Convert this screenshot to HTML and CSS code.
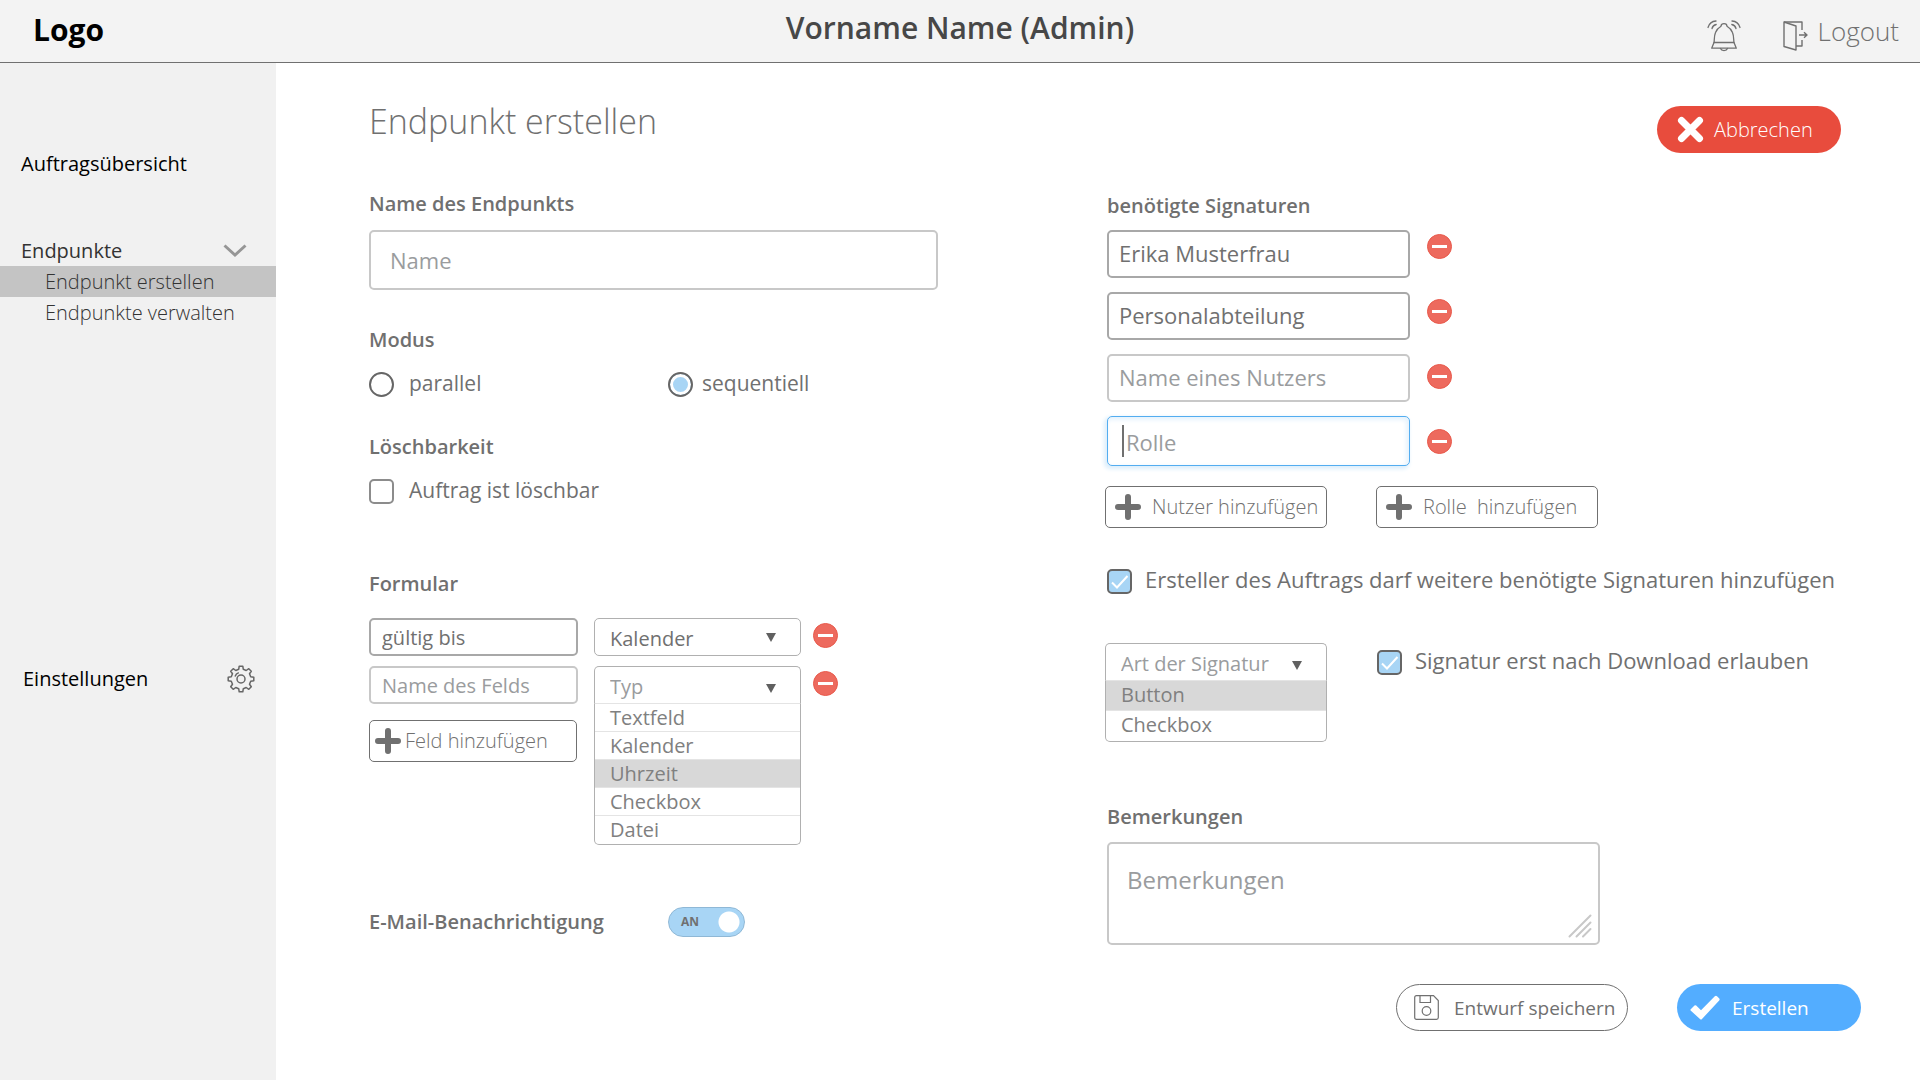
FILE: index.html
```html
<!DOCTYPE html>
<html lang="de">
<head>
<meta charset="utf-8">
<meta name="viewport" content="width=device-width, initial-scale=1">
<title>Endpunkt erstellen</title>
<link rel="stylesheet" href="styles.css">
</head>
<body>
<svg width="0" height="0" class="sprite" aria-hidden="true">
  <symbol id="minus" viewBox="0 0 25 25"><circle cx="12.5" cy="12.5" r="12" fill="#ed6a5e" stroke="#e8594b"/><path d="M5 12.5h15" stroke="#fff" stroke-width="3"/></symbol>
  <symbol id="plus" viewBox="0 0 26 26"><path d="M13 3v20M3 13h20" stroke="#707070" stroke-width="6" stroke-linecap="round"/></symbol>
</svg>

<header class="topbar">
  <a class="logo" href="#">Logo</a>
  <p class="user">Vorname Name (Admin)</p>
  <div class="tools">
    <button class="icon-button" type="button" aria-label="Benachrichtigungen">
      <svg width="34" height="32" viewBox="0 0 34 32" fill="none" stroke="#707070" stroke-width="1.3" stroke-linecap="round" stroke-linejoin="round">
        <path d="M7 22.500C7.500 20 7 16 8.500 12.500C9.600 9.500 12 7.500 14 6.300C14 4.500 15.200 3.600 17 3.600S20 4.500 20 6.300C22 7.500 24.400 9.500 25.500 12.500C27 16 26.500 20 27 22.500z"/>
        <path d="M7 22.500L4.700 28.200H29.300L27 22.500"/>
        <path d="M13.500 28.500C14.500 31.200 19.500 31.200 20.500 28.500"/>
        <path d="M1 7.500C2 4 5 1.200 9 1M5 8.500C5.500 6.500 7 5 9.200 4.500M33 7.500C32 4 29 1.200 25 1M29 8.500C28.500 6.500 27 5 24.800 4.500"/>
      </svg>
    </button>
    <a class="logout" href="#">
      <svg width="25" height="30" viewBox="0 0 25 30" fill="none" stroke="#707070" stroke-width="1.400" stroke-linejoin="round">
        <path d="M1 1L13 5V29L1 25.500z"/>
        <path d="M1 1H19V9M19 19V25H13"/>
        <path d="M16 14H24M21 11.300L24 14L21 16.700"/>
      </svg>
      <span>Logout</span>
    </a>
  </div>
</header>

<div class="layout">
  <nav class="sidebar">
    <a class="nav-link" href="#">Auftragsübersicht</a>
    <section class="nav-group">
      <a class="nav-link nav-parent" href="#">Endpunkte
        <svg width="24" height="14" viewBox="0 0 24 14" fill="none" stroke="#969696" stroke-width="3"><path d="M1.500 1.500L12 11L22.500 1.500"/></svg>
      </a>
      <a class="nav-sub active" href="#">Endpunkt erstellen</a>
      <a class="nav-sub" href="#">Endpunkte verwalten</a>
    </section>
    <a class="nav-link nav-settings" href="#">Einstellungen
      <svg width="28" height="28" viewBox="0 0 28 28" fill="none" stroke="#666" stroke-width="1.500" stroke-linejoin="round">
        <path d="M11.700 4.300L12.200 1.200H15.800L16.300 4.300L19.200 5.500L21.800 3.700L24.300 6.200L22.500 8.800L23.700 11.700L26.800 12.200V15.800L23.700 16.300L22.500 19.200L24.300 21.800L21.800 24.300L19.200 22.500L16.300 23.700L15.800 26.800H12.200L11.700 23.700L8.800 22.500L6.200 24.300L3.700 21.800L5.500 19.200L4.300 16.300L1.200 15.800V12.200L4.300 11.700L5.500 8.800L3.700 6.200L6.200 3.700L8.800 5.500z"/>
        <circle cx="14" cy="14" r="4"/>
        <path d="M8 11.500C8.700 9.500 10 8.200 11.800 7.600"/>
      </svg>
    </a>
  </nav>

  <main class="content">
    <form class="endpoint-form" onsubmit="return false">
      <div class="heading">
        <h1>Endpunkt erstellen</h1>
        <button class="pill pill-cancel" type="button">
          <svg width="27" height="27" viewBox="0 0 27 27" stroke="#fff" stroke-width="7" stroke-linecap="round"><path d="M4.500 4.500L22.500 22.500M22.500 4.500L4.500 22.500"/></svg>
          Abbrechen
        </button>
      </div>

      <div class="columns">
        <div class="column">
          <label class="label" for="endpoint-name">Name des Endpunkts</label>
          <input class="field field-name" id="endpoint-name" type="text" placeholder="Name">

          <fieldset class="group">
            <legend class="label">Modus</legend>
            <div class="choices">
              <label class="choice choice-mode"><input type="radio" name="modus"><span>parallel</span></label>
              <label class="choice choice-mode"><input type="radio" name="modus" checked><span>sequentiell</span></label>
            </div>
          </fieldset>

          <fieldset class="group">
            <legend class="label">Löschbarkeit</legend>
            <div class="choices">
              <label class="choice"><input type="checkbox"><span>Auftrag ist löschbar</span></label>
            </div>
          </fieldset>

          <fieldset class="group group-form">
            <legend class="label">Formular</legend>
            <div class="rows">
              <div class="row">
                <input class="field field-small filled" type="text" value="gültig bis" aria-label="Feldname">
                <div class="dropdown">
                  <select aria-label="Feldtyp"><option>Kalender</option></select>
                </div>
                <button class="icon-button" type="button" aria-label="Feld entfernen"><svg width="25" height="25"><use href="#minus"/></svg></button>
              </div>
              <div class="row">
                <input class="field field-small" type="text" placeholder="Name des Felds" aria-label="Feldname">
                <div class="dropdown open">
                  <select class="unset" aria-label="Feldtyp"><option>Typ</option></select>
                  <ul class="menu" role="listbox">
                    <li role="option">Textfeld</li>
                    <li role="option">Kalender</li>
                    <li role="option" class="current">Uhrzeit</li>
                    <li role="option">Checkbox</li>
                    <li role="option">Datei</li>
                  </ul>
                </div>
                <button class="icon-button" type="button" aria-label="Feld entfernen"><svg width="25" height="25"><use href="#minus"/></svg></button>
              </div>
            </div>
            <button class="add add-field" type="button"><svg width="26" height="26"><use href="#plus"/></svg>Feld hinzufügen</button>
          </fieldset>

          <div class="notify">
            <label class="label" for="mail">E-Mail-Benachrichtigung</label>
            <span class="switch"><input id="mail" type="checkbox" role="switch" checked><span class="switch-text">AN</span></span>
          </div>
        </div>

        <div class="column column-right">
          <fieldset class="signers">
            <legend class="label">benötigte Signaturen</legend>
            <div class="signer-list">
              <div class="signer-fields">
                <input class="field field-signer filled" type="text" value="Erika Musterfrau" aria-label="Nutzer">
                <input class="field field-signer filled" type="text" value="Personalabteilung" aria-label="Rolle">
                <input class="field field-signer" type="text" placeholder="Name eines Nutzers" aria-label="Nutzer">
                <div class="focus-wrap">
                  <input class="field field-signer focused" type="text" placeholder="Rolle" aria-label="Rolle">
                  <span class="caret"></span>
                </div>
              </div>
              <div class="signer-removes">
                <button class="icon-button" type="button" aria-label="Erika Musterfrau entfernen"><svg width="25" height="25"><use href="#minus"/></svg></button>
                <button class="icon-button" type="button" aria-label="Personalabteilung entfernen"><svg width="25" height="25"><use href="#minus"/></svg></button>
                <button class="icon-button" type="button" aria-label="Nutzer entfernen"><svg width="25" height="25"><use href="#minus"/></svg></button>
                <button class="icon-button" type="button" aria-label="Rolle entfernen"><svg width="25" height="25"><use href="#minus"/></svg></button>
              </div>
            </div>
          </fieldset>

          <div class="adds">
            <button class="add" type="button"><svg width="26" height="26"><use href="#plus"/></svg>Nutzer hinzufügen</button>
            <button class="add" type="button"><svg width="26" height="26"><use href="#plus"/></svg>Rolle&nbsp; hinzufügen</button>
          </div>

          <label class="choice choice-more"><input type="checkbox" checked><span>Ersteller des Auftrags darf weitere benötigte Signaturen hinzufügen</span></label>

          <div class="signature-kind">
            <div class="dropdown dropdown-wide open">
              <select class="unset" aria-label="Art der Signatur"><option>Art der Signatur</option></select>
              <ul class="menu" role="listbox">
                <li role="option" class="current">Button</li>
                <li role="option">Checkbox</li>
              </ul>
            </div>
            <label class="choice"><input type="checkbox" checked><span>Signatur erst nach Download erlauben</span></label>
          </div>

          <div class="remarks">
            <label class="label" for="remarks">Bemerkungen</label>
            <div class="remarks-box">
              <textarea class="field" id="remarks" placeholder="Bemerkungen"></textarea>
              <svg class="grip" width="24" height="24" viewBox="0 0 24 24" stroke="#c8c8c8" stroke-width="2" stroke-linecap="round"><path d="M1.500 22.500L22.500 1.500M8.500 22.500L22.500 8.500M15 22.500L22.500 15"/></svg>
            </div>
          </div>
        </div>
      </div>

      <div class="actions">
        <button class="pill pill-draft" type="button">
          <svg width="25" height="25" viewBox="0 0 25 25" fill="none" stroke="#707070" stroke-width="1.200"><path d="M2.500 .700H19.500L24.300 5.500V22.500Q24.300 24.300 22.500 24.300H2.500Q.700 24.300 .700 22.500V2.500Q.700 .700 2.500 .700z"/><path d="M6 .700V7.500H16.500V.700"/><circle cx="12.500" cy="16" r="4.300"/></svg>
          Entwurf speichern
        </button>
        <button class="pill pill-create" type="submit">
          <svg width="30" height="26" viewBox="0 0 30 26" fill="#fff"><path d="M.500 14.500L4.500 10.500Q5.300 9.900 6.200 10.600L11 15.300L24.800 1.200Q26 .300 27 1.200L29.300 3.500Q30 4.500 29.200 5.500L12 24Q11 25 10 24L.600 15.500Q.200 15 .500 14.500z"/></svg>
          Erstellen
        </button>
      </div>
    </form>
  </main>
</div>
</body>
</html>
```
FILE: styles.css
```css
* { box-sizing: border-box; }

body {
  margin: 0;
  min-height: 100vh;
  display: flex;
  flex-direction: column;
  background: #fff;
  color: #707070;
  font: 20px/28px "Open Sans", "Noto Sans", sans-serif;
}

a { color: inherit; text-decoration: none; }
h1, p, ul { margin: 0; padding: 0; }
svg { display: block; flex: none; }
fieldset { margin: 0; padding: 0; border: 0; min-width: 0; }
legend { padding: 0; }
input, select, textarea, button { font: inherit; color: inherit; margin: 0; }
button { cursor: pointer; }
.sprite { position: absolute; }

/* Top bar */
.topbar {
  display: grid;
  grid-template-columns: 1fr auto 1fr;
  height: 63px;
  padding: 0 21px;
  background: #f3f3f3;
  border-bottom: 1px solid #707070;
}
.logo { padding: 10px 0 0 12px; color: #000; font-size: 30px; font-weight: 700; line-height: 40px; }
.user { padding-top: 8px; color: #474747; font-size: 30px; font-weight: 600; line-height: 40px; }
.tools { display: flex; justify-content: flex-end; align-items: flex-start; padding-top: 12px; gap: 42px; }
.tools .icon-button { padding-top: 8px; }
.logout { display: flex; gap: 10px; font-size: 26px; font-weight: 300; line-height: 38px; }
.logout svg { margin-top: 9px; }
.icon-button { padding: 0; border: 0; background: none; }

/* Sidebar */
.layout { flex: 1; display: flex; }
.sidebar { flex: 0 0 276px; padding-top: 86px; background: #f1f1f1; color: #000; }
.nav-link { display: flex; justify-content: space-between; align-items: center; height: 30px; padding: 0 29px 0 21px; }
.nav-group { margin: 57px 0 336px; }
.nav-parent { color: #333; }
.nav-settings { padding: 0 21px 0 23px; }
.nav-sub { display: block; padding-left: 45px; color: #333; font-weight: 300; line-height: 31px; }
.nav-sub.active { background: #c4c4c4; }

/* Page */
.content { flex: 1; min-width: 0; padding: 35px 79px 40px 93px; }
.heading { display: flex; justify-content: space-between; align-items: flex-start; }
h1 { font-size: 34px; font-weight: 300; line-height: 46px; }
.columns { display: grid; grid-template-columns: 1fr 1fr; margin-top: 37px; }
.column-right { padding-top: 2px; }
.label { display: block; font-weight: 600; }

/* Fields */
.field {
  display: block;
  max-width: 100%;
  border: 2px solid #c8c8c8;
  border-radius: 5px;
  background: #fff;
  outline: 0;
}
.field::placeholder { color: #9a9c9e; opacity: 1; }
.filled { border-color: #a8a8a8; }
.field-name { width: 569px; height: 60px; margin-top: 12px; padding: 0 19px; font-size: 22px; }
.field-small { width: 209px; height: 38px; padding: 0 11px; }
.field-signer { width: 303px; height: 48px; padding: 0 10px 2px; font-size: 22px; }
.focused { height: 50px; padding: 2px 18px 0; border: 1px solid #53adf0; box-shadow: -2px 2px 4px 1px #dceefb, inset -2px 2px 4px 1px #e6f3fd; }
.focus-wrap { position: relative; }
.caret { position: absolute; left: 15px; top: 9px; width: 2px; height: 32px; background: #707070; }

/* Radio buttons and tick boxes */
.group { margin-top: 36px; }
.choices { display: flex; margin-top: 17px; }
.choice { display: flex; align-items: center; height: 26px; font-size: 22px; }
.choices .choice { font-size: 21px; }
.choice span { padding: 0 0 4px 13px; white-space: nowrap; }
.choices .choice span { padding: 0 0 2px 15px; }
.choices .choice-mode:last-child span { padding-left: 9px; }
.choice-mode { flex: 0 0 299px; }
.choice input { flex: none; appearance: none; width: 25px; height: 25px; border: 2px solid #666; background: #fff; }
.choice input[type="radio"] { border-radius: 50%; }
.choice input[type="radio"]:checked { background: #a8d5f5; box-shadow: inset 0 0 0 3px #fff; }
.choice input[type="checkbox"] { border-color: #8c8c8c; border-radius: 5px; }
.choice input[type="checkbox"]:checked {
  border-color: #666;
  background: #a8d5f5 url("data:image/svg+xml,%3Csvg xmlns='http://www.w3.org/2000/svg' viewBox='0 0 21 21'%3E%3Cpath d='M3 11.500L8 16.500L18.500 5' fill='none' stroke='%23fff' stroke-width='2'/%3E%3C/svg%3E") center / 21px 21px no-repeat;
}

/* Form rows */
.group-form { margin-top: 66px; }
.rows { display: flex; flex-direction: column; gap: 10px; margin-top: 20px; }
.row { display: flex; align-items: center; gap: 16px; }
.row .icon-button { margin-left: -4px; padding-bottom: 3px; }
.dropdown { position: relative; width: 207px; height: 38px; }
.dropdown-wide { width: 222px; }
.dropdown select {
  width: 100%;
  height: 38px;
  padding: 3px 40px 0 15px;
  appearance: none;
  border: 1px solid #b0b0b0;
  border-radius: 5px;
  background: url("data:image/svg+xml,%3Csvg xmlns='http://www.w3.org/2000/svg' viewBox='0 0 10 9'%3E%3Cpath d='M0 0H10L5 9z' fill='%23606060'/%3E%3C/svg%3E") right 24px center / 10px 9px no-repeat;
}
.dropdown select.unset { color: #9a9c9e; background-position: right 24px bottom 10px; }
.open select { border-bottom-color: #e4e4e4; border-radius: 5px 5px 0 0; }
.menu {
  position: absolute;
  z-index: 1;
  top: 38px;
  left: 0;
  right: 0;
  border: 1px solid #b0b0b0;
  border-top: 0;
  border-radius: 0 0 5px 5px;
  background: #fff;
  color: #808080;
  list-style: none;
}
.menu li { height: 28px; padding-left: 15px; border-bottom: 1px solid #e4e4e4; }
.menu li:last-child { border-bottom: 0; }
.menu .current { background: #d8d8d8; }
.dropdown-wide .menu li { height: 30px; }

.add {
  display: flex;
  align-items: center;
  width: 222px;
  height: 42px;
  padding: 0 0 0 9px;
  gap: 11px;
  border: 1px solid #707070;
  border-radius: 5px;
  background: #fff;
  font-weight: 300;
  white-space: nowrap;
}
.add-field { width: 208px; margin-top: 16px; padding-left: 5px; gap: 4px; }
.adds { display: flex; gap: 49px; margin-top: 20px; }

/* Switch */
.notify { display: flex; align-items: center; height: 30px; margin-top: 145px; }
.notify .label { flex: 0 0 299px; }
.switch { position: relative; width: 77px; height: 30px; }
.switch input {
  display: block;
  width: 77px;
  height: 30px;
  appearance: none;
  border: 1px solid #8fb8d6;
  border-radius: 15px;
  background: radial-gradient(circle at 60px 14px, #fff 10px, #a8d5f5 11px);
}
.switch-text { position: absolute; left: 13px; top: 0; font-size: 12px; font-weight: 700; line-height: 30px; pointer-events: none; }

/* Signatures */
.signers { padding-left: 2px; }
.signer-list { display: flex; gap: 17px; margin-top: 10px; }
.signer-fields { display: flex; flex-direction: column; gap: 14px; }
.signer-removes { display: flex; flex-direction: column; gap: 40px; padding-top: 4px; }
.choice-more { margin-top: 40px; padding-left: 2px; }
.signature-kind { display: flex; align-items: center; gap: 50px; margin-top: 49px; }
.remarks { margin-top: 122px; padding-left: 2px; }
.remarks-box { position: relative; width: 493px; margin-top: 11px; }
.remarks textarea { width: 100%; height: 103px; padding: 20px 18px; resize: none; font-size: 24px; line-height: 32px; }
.grip { position: absolute; right: 8px; bottom: 7px; pointer-events: none; }

/* Pill buttons */
.pill { display: flex; align-items: center; height: 47px; border: 0; border-radius: 24px; white-space: nowrap; }
.pill-cancel { width: 184px; margin-top: 8px; padding: 0 0 0 20px; gap: 10px; background: #e84c3d; color: #fff; font-weight: 300; }
.pill-draft { width: 232px; padding: 0 0 0 17px; gap: 15px; border: 1px solid #707070; background: #fff; font-size: 19px; }
.pill-create { width: 184px; padding: 0 0 0 13px; gap: 12px; background: #53adff; color: #fff; font-size: 19px; }
.actions { display: flex; justify-content: flex-end; gap: 49px; margin: 39px -20px 0 0; }
```
